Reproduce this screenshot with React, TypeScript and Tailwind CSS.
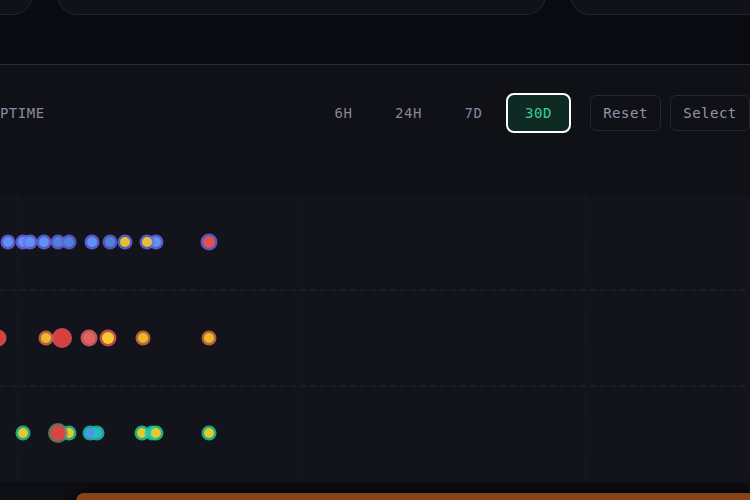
const mono = { fontFamily: '"DejaVu Sans Mono", "Liberation Mono", monospace' };

type Dot = { x: number; ring: string; fill: string; r?: number };

const BLUE = { ring: "#6d6cf0", fill: "#5e93f5" };
const BLUE_Y = { ring: "#6d6cf0", fill: "#e2c233" };
const BLUE_R = { ring: "#7066e8", fill: "#e0524a" };
const ORANGE = { ring: "#e2753f", fill: "#e8bb2f" };
const RED = { ring: "#ef5a5a", fill: "#db3e3e" };
const PINK = { ring: "#e66a6a", fill: "#e06262" };
const RED_Y = { ring: "#ef5a5a", fill: "#f5c933" };
const GREEN = { ring: "#22d39a", fill: "#e3c92f" };
const TEAL = { ring: "#1fc9b4", fill: "#2fb8c0" };
const TEAL_B = { ring: "#1fc9b4", fill: "#4f96e8" };
const RED_G = { ring: "#6f8a6a", fill: "#da4545" };

const rows: { y: number; dots: Dot[] }[] = [
  {
    y: 47,
    dots: [
      { x: 8, ...BLUE },
      { x: 23, ...BLUE },
      { x: 30, ...BLUE },
      { x: 44, ...BLUE },
      { x: 58, ring: "#6366e6", fill: "#4f82d8" },
      { x: 69, ring: "#6366e6", fill: "#4f82d8" },
      { x: 92, ...BLUE },
      { x: 110, ring: "#6366e6", fill: "#4f82d8" },
      { x: 125, ...BLUE_Y },
      { x: 156, ...BLUE },
      { x: 147, ...BLUE_Y },
      { x: 209, r: 8.5, ...BLUE_R },
    ],
  },
  {
    y: 143,
    dots: [
      { x: -2, r: 8.5, ...RED },
      { x: 46, ...ORANGE },
      { x: 62, r: 10, ...RED },
      { x: 89, r: 8.5, ...PINK },
      { x: 108, r: 8.5, ...RED_Y },
      { x: 143, ...ORANGE },
      { x: 209, ...ORANGE },
    ],
  },
  {
    y: 238,
    dots: [
      { x: 23, ...GREEN },
      { x: 69, ...GREEN },
      { x: 58, r: 10, ...RED_G },
      { x: 97, ...TEAL },
      { x: 90, ...TEAL_B },
      { x: 142, ...GREEN },
      { x: 152, ...TEAL },
      { x: 156, ...GREEN },
      { x: 209, ...GREEN },
    ],
  },
];

function Chart() {
  return (
    <svg width={750} height={287} className="block">
      <defs>
        <filter id="soft" x="-50%" y="-50%" width="200%" height="200%">
          <feGaussianBlur stdDeviation="0.6" />
        </filter>
      </defs>
      {[17, 301, 585].map((x) => (
        <line key={x} x1={x} y1={0} x2={x} y2={287} stroke="#1d1d27" strokeDasharray="5 4" />
      ))}
      {[95, 191].map((y) => (
        <line key={y} x1={0} y1={y} x2={750} y2={y} stroke="#272731" strokeDasharray="6 4" />
      ))}
      {rows.map((row) =>
        row.dots.map((d, i) => {
          const r = d.r ?? 7.5;
          return (
            <g key={`${row.y}-${i}`}>
              <circle cx={d.x} cy={row.y} r={r} fill={d.ring} opacity={0.8} filter="url(#soft)" />
              <circle cx={d.x} cy={row.y} r={r - 2.5} fill={d.fill} />
            </g>
          );
        })
      )}
    </svg>
  );
}

export default function App() {
  return (
    <div className="relative w-[750px] h-[500px] overflow-hidden bg-[#0a0a11]" style={mono}>
      {/* cards above */}
      <div className="flex flex-col h-[65px] border-b border-[#2a2a34]">
        <div className="flex gap-[24px] -mt-[65px] -ml-[200px]">
          <div className="w-[233px] h-[80px] shrink-0 rounded-[20px] border border-[#24242e] bg-[#11111a]" />
          <div className="w-[489px] h-[80px] shrink-0 rounded-[20px] border border-[#24242e] bg-[#11111a]" />
          <div className="w-[300px] h-[80px] shrink-0 rounded-[20px] border border-[#24242e] bg-[#11111a]" />
        </div>
      </div>

      <div className="bg-[#101017] pt-[28px]">
        <div className="flex items-center justify-between h-10">
          <span className="-ml-[9px] text-[14px] tracking-[0.5px] text-[#8a8a9e]">UPTIME</span>
          <div className="flex items-center">
            {["6H", "24H", "7D"].map((t) => (
              <button key={t} className="w-[65px] h-10 text-[14px] tracking-[0.5px] text-[#86869a]">
                {t}
              </button>
            ))}
            <button className="w-[65px] h-10 rounded-lg border-2 border-white bg-[#0e2a22] text-[14px] tracking-[0.5px] text-[#34d399]">
              30D
            </button>
            <button className="ml-[19px] w-[71px] h-9 rounded-md border border-[#262631] text-[14px] tracking-[0.5px] text-[#9494a6]">
              Reset
            </button>
            <button className="ml-[9px] w-[80px] h-9 rounded-md border border-[#262631] text-[14px] tracking-[0.5px] text-[#9494a6]">
              Select
            </button>
          </div>
        </div>
        <div className="mt-[62px] bg-[#13131b]">
          <Chart />
        </div>
        <div className="h-[40px] bg-[#0e0e15]" />
      </div>

      {/* bottom banner */}
      <div className="absolute left-[76px] top-[493px] w-[700px] h-[40px] rounded-tl-lg bg-[#86431a] shadow-[0_-4px_10px_rgba(0,0,0,0.5)]" />
    </div>
  );
}
